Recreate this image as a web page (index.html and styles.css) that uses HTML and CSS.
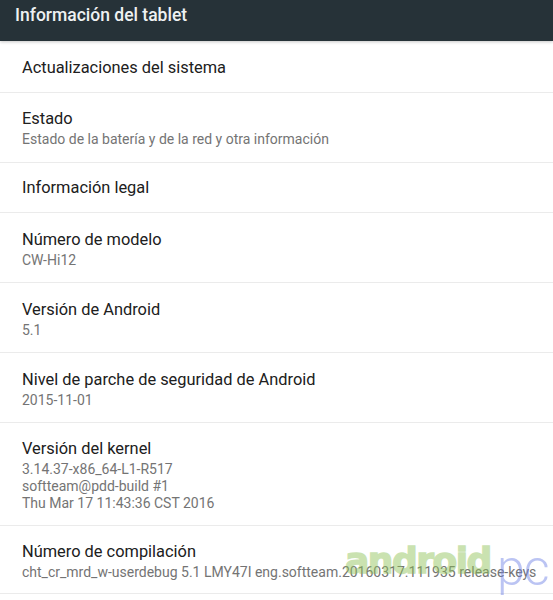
FILE: index.html
```html
<!DOCTYPE html>
<html lang="es">
<head>
<meta charset="utf-8">
<title>Información del tablet</title>
<link rel="stylesheet" href="styles.css">
</head>
<body>
<div class="screen">
  <header class="appbar"><span class="appbar-title">Información del tablet</span></header>
  <ul class="list">
    <li class="row single"><div class="title">Actualizaciones del sistema</div></li>
    <li class="row double"><div class="title">Estado</div><div class="sub">Estado de la batería y de la red y otra información</div></li>
    <li class="row single"><div class="title">Información legal</div></li>
    <li class="row double"><div class="title">Número de modelo</div><div class="sub">CW-Hi12</div></li>
    <li class="row double"><div class="title">Versión de Android</div><div class="sub">5.1</div></li>
    <li class="row double"><div class="title">Nivel de parche de seguridad de Android</div><div class="sub">2015-11-01</div></li>
    <li class="row multi"><div class="title">Versión del kernel</div><div class="sub">3.14.37-x86_64-L1-R517<br>softteam@pdd-build #1<br>Thu Mar 17 11:43:36 CST 2016</div></li>
    <li class="row double last"><div class="title">Número de compilación</div><div class="sub">cht_cr_mrd_w-userdebug 5.1 LMY47I eng.softteam.20160317.111935 release-keys</div></li>
  </ul>
  <span class="wm-android">android</span>
  <span class="wm-pc">pc</span>
</div>
</body>
</html>
```
FILE: styles.css
```css
html, body {
  margin: 0;
  padding: 0;
  background: #ffffff;
}
.screen {
  position: relative;
  width: 553px;
  height: 600px;
  overflow: hidden;
  font-family: Roboto, "Liberation Sans", sans-serif;
  background: #ffffff;
}
.appbar {
  height: 41px;
  background: #263238;
  box-shadow: 0 1px 3px rgba(0,0,0,0.22);
  padding: 3px 0 0 15px;
  box-sizing: border-box;
  position: relative;
  z-index: 1;
}
.appbar-title {
  color: #eef1f2;
  font-size: 17.5px;
  font-weight: 500;
  line-height: 24px;
}
.list {
  list-style: none;
  margin: 0;
  padding: 1px 0 0 0;
}
.row {
  padding: 0 22px;
  border-bottom: 1px solid #ebebeb;
  display: flex;
  flex-direction: column;
  justify-content: center;
  box-sizing: border-box;
  white-space: nowrap;
}
.row.single { height: 50.5px; padding-top: 1px; }
.row.double { height: 70px; padding-top: 1px; }
.row.multi { height: 102.5px; padding-top: 1px; }
.row.last { height: 68px; padding-top: 2px; }
.title {
  color: #202020;
  font-size: 16.4px;
  line-height: 23px;
}
.sub {
  color: #747474;
  font-size: 14px;
  line-height: 16.7px;
  margin-top: 1px;
}
.wm-android {
  position: absolute;
  left: 345px;
  top: 543px;
  font-family: "DejaVu Sans", Roboto, sans-serif;
  font-weight: 700;
  font-size: 36px;
  line-height: 1;
  letter-spacing: -1.5px;
  color: #8cc152;
  -webkit-text-stroke: 1.5px #8cc152;
  opacity: 0.45;
  white-space: nowrap;
  pointer-events: none;
}
.wm-pc {
  position: absolute;
  left: 497px;
  top: 543px;
  font-family: Roboto, "Liberation Sans", sans-serif;
  font-weight: 300;
  font-size: 50px;
  line-height: 1;
  letter-spacing: -1px;
  color: #6a7de6;
  opacity: 0.45;
  white-space: nowrap;
  pointer-events: none;
}
```
